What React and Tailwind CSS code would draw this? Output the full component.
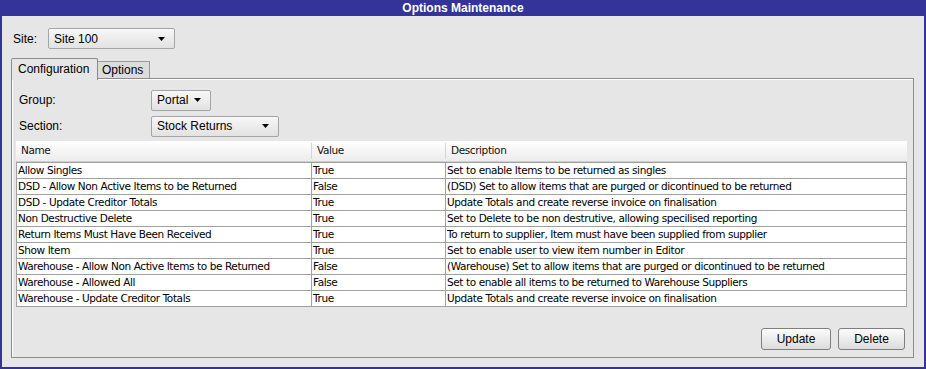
import React from 'react';

const rows = [
  ['Allow Singles', 'True', 'Set to enable Items to be returned as singles'],
  ['DSD - Allow Non Active Items to be Returned', 'False', '(DSD) Set to allow items that are purged or dicontinued to be returned'],
  ['DSD - Update Creditor Totals', 'True', 'Update Totals and create reverse invoice on finalisation'],
  ['Non Destructive Delete', 'True', 'Set to Delete to be non destrutive, allowing specilised reporting'],
  ['Return Items Must Have Been Received', 'True', 'To return to supplier, Item must have been supplied from supplier'],
  ['Show Item', 'True', 'Set to enable user to view item number in Editor'],
  ['Warehouse - Allow Non Active Items to be Returned', 'False', '(Warehouse) Set to allow items that are purged or dicontinued to be returned'],
  ['Warehouse - Allowed All', 'False', 'Set to enable all items to be returned to Warehouse Suppliers'],
  ['Warehouse - Update Creditor Totals', 'True', 'Update Totals and create reverse invoice on finalisation'],
];

// Small combo box with a black down arrow
const Combo = ({ label, width }) => (
  <div
    className="flex items-center justify-between h-[21px] pl-[5px] pr-[9px] border border-[#a5a5a5] rounded-[2px] bg-gradient-to-b from-[#f7f7f7] to-[#e2e2e2] text-[12px] text-black"
    style={{ width }}
  >
    <span>{label}</span>
    <svg width="7" height="4" viewBox="0 0 7 4"><path d="M0 0 L7 0 L3.5 4 Z" fill="#000" /></svg>
  </div>
);

const Button = ({ children, width }) => (
  <button
    className="h-[22px] border border-[#7f7f7f] rounded-[3px] bg-gradient-to-b from-[#fcfcfc] to-[#dcdcdc] text-[12px] text-black leading-none"
    style={{ width }}
  >
    {children}
  </button>
);

export default function App() {
  return (
    <div
      className="w-[926px] h-[369px] flex flex-col bg-[#e6e6e6] border-x-2 border-b-2 border-[#333399] text-black"
      style={{ fontFamily: '"Liberation Sans", Arial, sans-serif' }}
    >
      {/* Title bar */}
      <div className="h-[16px] bg-[#333399] text-white font-bold text-[12px] leading-[16px] text-center">
        Options Maintenance
      </div>

      <div className="flex flex-col pl-[9px] pr-[10px]">
        {/* Site selector */}
        <div className="flex items-center mt-[12px] h-[21px]">
          <span className="text-[12px] ml-[2px] w-[35px]">Site:</span>
          <Combo label="Site 100" width={127} />
        </div>

        {/* Tabs */}
        <div className="flex items-end mt-[8px] h-[22px]">
          <div className="h-[22px] w-[87px] border border-b-0 border-[#8c8c8c] bg-[#e6e6e6] rounded-t-[2px] text-[12px] pl-[6px] pt-[1px] relative z-10 -mb-px">
            Configuration
          </div>
          <div className="h-[18px] w-[52px] border border-l-0 border-b-0 border-[#9a9a9a] bg-[#dcdcdc] text-[12px] pl-[4px] pt-px leading-[15px]">
            Options
          </div>
        </div>

        {/* Tab panel */}
        <div className="w-[903px] h-[280px] -mt-px border border-[#8c8c8c] shadow-[inset_1px_1px_0_#ffffff] flex flex-col">
          <div className="flex items-center mt-[10px] h-[22px]">
            <span className="text-[12px] w-[139px] pl-[7px]">Group:</span>
            <Combo label="Portal" width={60} />
          </div>
          <div className="flex items-center mt-[4px] h-[22px]">
            <span className="text-[12px] w-[139px] pl-[7px]">Section:</span>
            <Combo label="Stock Returns" width={128} />
          </div>

          {/* Options table */}
          <div
            className="ml-[4px] mt-[4px] w-[891px] text-[10.5px] tracking-[-0.4px]"
            style={{ fontFamily: '"DejaVu Sans", Tahoma, sans-serif' }}
          >
            <div className="flex h-[21px] items-center bg-gradient-to-b from-[#ffffff] to-[#ececec] border-b border-[#cfcfcf] text-[#111]">
              <div className="w-[296px] pl-[5px] border-r border-[#d5d5d5]">Name</div>
              <div className="w-[134px] pl-[5px] border-r border-[#d5d5d5]">Value</div>
              <div className="flex-1 pl-[5px]">Description</div>
            </div>
            <div className="border-l border-t border-[#a0a0a0]">
              {rows.map(([name, value, desc]) => (
                <div key={name} className="flex h-[16px] items-center bg-white border-b border-[#a0a0a0] whitespace-nowrap">
                  <div className="w-[295px] h-full pl-[1px] border-r border-[#a0a0a0] leading-[15px]">{name}</div>
                  <div className="w-[134px] h-full pl-[1px] border-r border-[#a0a0a0] leading-[15px]">{value}</div>
                  <div className="flex-1 h-full pl-[1px] border-r border-[#a0a0a0] leading-[15px]">{desc}</div>
                </div>
              ))}
            </div>
          </div>

          {/* Actions */}
          <div className="flex justify-end gap-[7px] mt-auto mb-[7px] mr-[8px]">
            <Button width={70}>Update</Button>
            <Button width={67}>Delete</Button>
          </div>
        </div>
      </div>
    </div>
  );
}
